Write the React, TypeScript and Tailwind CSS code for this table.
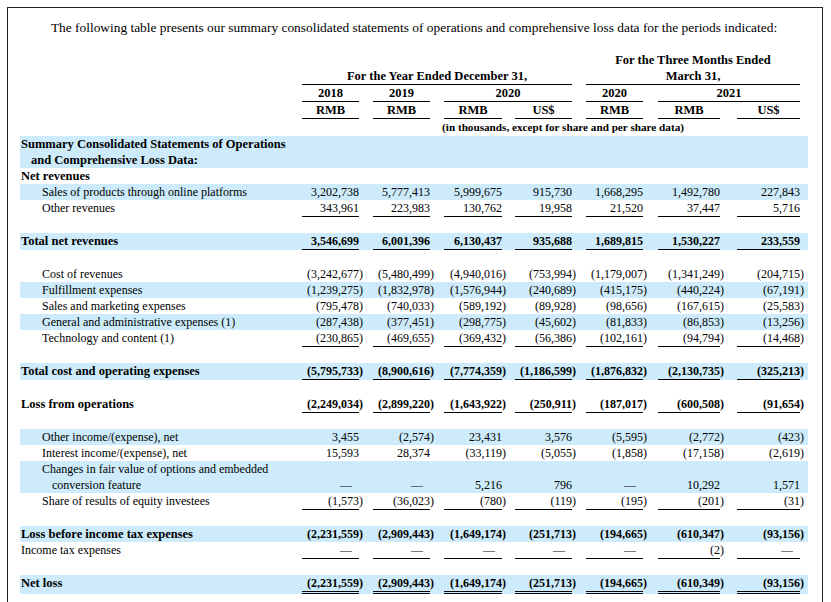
import React from "react";

type Row = {
  label?: string;
  indent?: "l0" | "l1" | "lh" | "l2";
  bold?: boolean;
  shade?: boolean;
  vals?: string[];
  ul?: "single" | "double";
  blank?: boolean;
};

const cols = [
  "w-[57px]",
  "ml-[14px] w-[57px]",
  "ml-[14px] w-[58px]",
  "ml-[13px] w-[57px]",
  "ml-[14px] w-[57px]",
  "ml-[15px] w-[62px]",
  "ml-[17px] w-[63px]",
];

const indentCls: Record<string, string> = {
  l0: "pl-[1px]",
  lh: "pl-[11px]",
  l1: "pl-[22px]",
  l2: "pl-[32px]",
};

const rows: Row[] = [
  { label: "Summary Consolidated Statements of Operations", indent: "l0", bold: true, shade: true },
  { label: "and Comprehensive Loss Data:", indent: "lh", bold: true, shade: true },
  { label: "Net revenues", indent: "l0", bold: true },
  {
    label: "Sales of products through online platforms",
    indent: "l1",
    shade: true,
    vals: ["3,202,738", "5,777,413", "5,999,675", "915,730", "1,668,295", "1,492,780", "227,843"],
  },
  {
    label: "Other revenues",
    indent: "l1",
    ul: "single",
    vals: ["343,961", "223,983", "130,762", "19,958", "21,520", "37,447", "5,716"],
  },
  { blank: true },
  {
    label: "Total net revenues",
    indent: "l0",
    bold: true,
    shade: true,
    ul: "single",
    vals: ["3,546,699", "6,001,396", "6,130,437", "935,688", "1,689,815", "1,530,227", "233,559"],
  },
  { blank: true },
  {
    label: "Cost of revenues",
    indent: "l1",
    vals: ["(3,242,677)", "(5,480,499)", "(4,940,016)", "(753,994)", "(1,179,007)", "(1,341,249)", "(204,715)"],
  },
  {
    label: "Fulfillment expenses",
    indent: "l1",
    shade: true,
    vals: ["(1,239,275)", "(1,832,978)", "(1,576,944)", "(240,689)", "(415,175)", "(440,224)", "(67,191)"],
  },
  {
    label: "Sales and marketing expenses",
    indent: "l1",
    vals: ["(795,478)", "(740,033)", "(589,192)", "(89,928)", "(98,656)", "(167,615)", "(25,583)"],
  },
  {
    label: "General and administrative expenses (1)",
    indent: "l1",
    shade: true,
    vals: ["(287,438)", "(377,451)", "(298,775)", "(45,602)", "(81,833)", "(86,853)", "(13,256)"],
  },
  {
    label: "Technology and content (1)",
    indent: "l1",
    ul: "single",
    vals: ["(230,865)", "(469,655)", "(369,432)", "(56,386)", "(102,161)", "(94,794)", "(14,468)"],
  },
  { blank: true },
  {
    label: "Total cost and operating expenses",
    indent: "l0",
    bold: true,
    shade: true,
    ul: "single",
    vals: ["(5,795,733)", "(8,900,616)", "(7,774,359)", "(1,186,599)", "(1,876,832)", "(2,130,735)", "(325,213)"],
  },
  { blank: true },
  {
    label: "Loss from operations",
    indent: "l0",
    bold: true,
    ul: "single",
    vals: ["(2,249,034)", "(2,899,220)", "(1,643,922)", "(250,911)", "(187,017)", "(600,508)", "(91,654)"],
  },
  { blank: true },
  {
    label: "Other income/(expense), net",
    indent: "l1",
    shade: true,
    vals: ["3,455", "(2,574)", "23,431", "3,576", "(5,595)", "(2,772)", "(423)"],
  },
  {
    label: "Interest income/(expense), net",
    indent: "l1",
    vals: ["15,593", "28,374", "(33,119)", "(5,055)", "(1,858)", "(17,158)", "(2,619)"],
  },
  { label: "Changes in fair value of options and embedded", indent: "l1", shade: true },
  {
    label: "conversion feature",
    indent: "l2",
    shade: true,
    vals: ["—", "—", "5,216", "796", "—", "10,292", "1,571"],
  },
  {
    label: "Share of results of equity investees",
    indent: "l1",
    ul: "single",
    vals: ["(1,573)", "(36,023)", "(780)", "(119)", "(195)", "(201)", "(31)"],
  },
  { blank: true },
  {
    label: "Loss before income tax expenses",
    indent: "l0",
    bold: true,
    shade: true,
    vals: ["(2,231,559)", "(2,909,443)", "(1,649,174)", "(251,713)", "(194,665)", "(610,347)", "(93,156)"],
  },
  {
    label: "Income tax expenses",
    indent: "l0",
    ul: "single",
    vals: ["—", "—", "—", "—", "—", "(2)", "—"],
  },
  { blank: true },
  {
    label: "Net loss",
    indent: "l0",
    bold: true,
    shade: true,
    ul: "double",
    vals: ["(2,231,559)", "(2,909,443)", "(1,649,174)", "(251,713)", "(194,665)", "(610,349)", "(93,156)"],
  },
];

function Num({ v }: { v: string }) {
  if (v === "—") return <span className="pr-[7px]">—</span>;
  if (v.endsWith(")")) {
    return (
      <>
        <span>{v.slice(0, -1)}</span>
        <span className="inline-block w-0 text-left">)</span>
      </>
    );
  }
  return <span>{v}</span>;
}

function BodyRow({ r }: { r: Row }) {
  if (r.blank) return <div className="h-[16px]" />;
  const ulCls =
    r.ul === "single"
      ? "border-b border-black"
      : r.ul === "double"
      ? "border-b-[3px] border-double border-black"
      : "";
  return (
    <div className={`flex items-start ${r.shade ? "bg-[#cdebfa]" : ""} ${r.bold ? "font-bold" : ""}`}>
      <div
        className={`w-[282px] shrink-0 whitespace-nowrap leading-[16px] ${r.bold ? "text-[12.5px]" : ""} ${indentCls[r.indent || "l0"]}`}
      >
        {r.label}
      </div>
      {r.vals &&
        r.vals.map((v, i) => (
          <div key={i} className={`${cols[i]} shrink-0 text-right leading-[16px] whitespace-nowrap ${ulCls}`}>
            <Num v={v} />
          </div>
        ))}
    </div>
  );
}

export default function App() {
  return (
    <div className="w-[831px] h-[602px] overflow-hidden bg-white pt-[7px] pl-[7px] text-black font-['Liberation_Serif','Times_New_Roman',serif]">
      <div className="w-[816px] h-[640px] border border-[#222] pt-[12px] pl-[12px] pr-[14px]">
        <p className="text-[13.4px] leading-[16px] text-center whitespace-nowrap">
          The following table presents our summary consolidated statements of operations and comprehensive loss data for the periods indicated:
        </p>
        <div className="mt-[16px] text-[12px]">
          {/* header */}
          <div className="font-bold text-[12.5px]">
            <div className="flex">
              <div className="w-[282px] shrink-0" />
              <div className="w-[270px] shrink-0" />
              <div className="ml-[14px] w-[214px] shrink-0 text-center leading-[16px]">For the Three Months Ended</div>
            </div>
            <div className="flex">
              <div className="w-[282px] shrink-0" />
              <div className="w-[270px] shrink-0 text-center leading-[16px] border-b border-black">
                For the Year Ended December 31,
              </div>
              <div className="ml-[14px] w-[214px] shrink-0 text-center leading-[16px] border-b border-black">
                March 31,
              </div>
            </div>
            <div className="flex">
              <div className="w-[282px] shrink-0" />
              <div className="w-[57px] shrink-0 text-center leading-[16px] border-b border-black">2018</div>
              <div className="ml-[14px] w-[57px] shrink-0 text-center leading-[16px] border-b border-black">2019</div>
              <div className="ml-[14px] w-[128px] shrink-0 text-center leading-[16px] border-b border-black">2020</div>
              <div className="ml-[14px] w-[57px] shrink-0 text-center leading-[16px] border-b border-black">2020</div>
              <div className="ml-[15px] w-[142px] shrink-0 text-center leading-[16px] border-b border-black">2021</div>
            </div>
            <div className="flex">
              <div className="w-[282px] shrink-0" />
              {["RMB", "RMB", "RMB", "US$", "RMB", "RMB", "US$"].map((t, i) => (
                <div key={i} className={`${cols[i]} shrink-0 text-center leading-[16px] border-b border-black`}>
                  {t}
                </div>
              ))}
            </div>
            <div className="flex">
              <div className="w-[282px] shrink-0" />
              <div className="w-[498px] shrink-0 pl-[24px] text-center text-[11.2px] leading-[16px] whitespace-nowrap">
                (in thousands, except for share and per share data)
              </div>
            </div>
          </div>
          <div className="h-px" />
          {/* body */}
          {rows.map((r, i) => (
            <BodyRow key={i} r={r} />
          ))}
        </div>
      </div>
    </div>
  );
}
